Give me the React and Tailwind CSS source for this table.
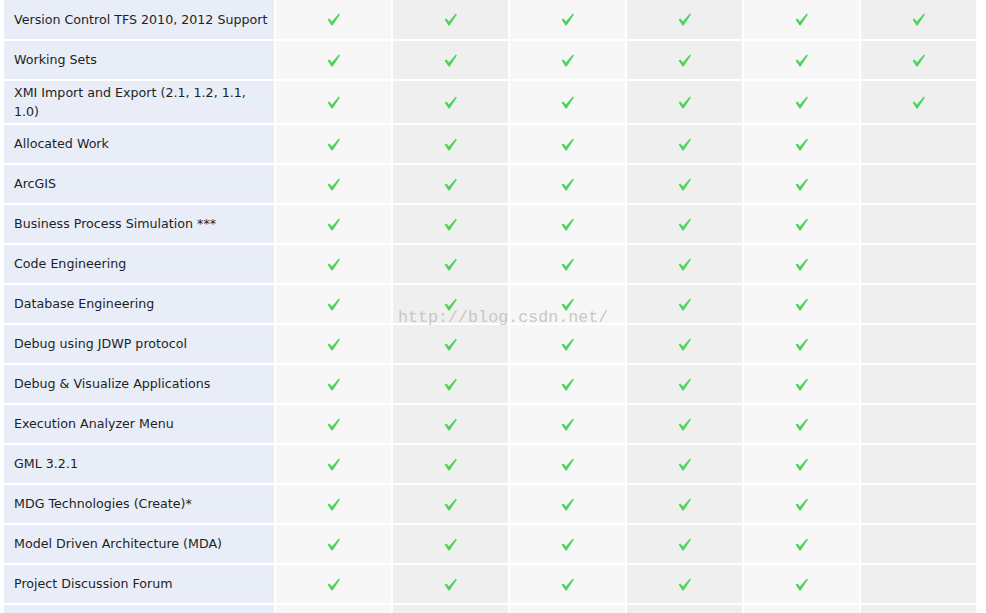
import React from "react";

const rows = [
  { label: "Version Control TFS 2010, 2012 Support", last: true, first: true },
  { label: "Working Sets", last: true },
  { label: ["XMI Import and Export (2.1, 1.2, 1.1,", "1.0)"], last: true },
  { label: "Allocated Work" },
  { label: "ArcGIS" },
  { label: "Business Process Simulation ***" },
  { label: "Code Engineering" },
  { label: "Database Engineering" },
  { label: "Debug using JDWP protocol" },
  { label: "Debug & Visualize Applications" },
  { label: "Execution Analyzer Menu" },
  { label: "GML 3.2.1" },
  { label: "MDG Technologies (Create)*" },
  { label: "Model Driven Architecture (MDA)" },
  { label: "Project Discussion Forum" },
  { label: "", empty: true },
];

function Check() {
  return (
    <svg width="13" height="13" viewBox="0 0 13 13" className="block">
      <path
        d="M0.6 6.6 L2.4 5.4 L4.9 8.6 L11.9 0.6 L12.9 1.5 L5.6 12.6 L4.5 12.6 Z"
        fill="#4ad55a"
      />
    </svg>
  );
}

export default function App() {
  const colBg = ["bg-[#f7f7f7]", "bg-[#efefef]", "bg-[#f7f7f7]", "bg-[#efefef]", "bg-[#f7f7f7]", "bg-[#efefef]"];
  return (
    <div className="relative h-[613px] w-[986px] overflow-hidden bg-white">
      <div
        className="grid grid-cols-[270px_repeat(6,115px)] gap-[2px] pl-[4px] text-[12.65px] text-[#1f1f24]"
        style={{ fontFamily: '"DejaVu Sans", Verdana, sans-serif' }}
      >
        {rows.map((r, i) => (
          <React.Fragment key={i}>
            <div
              className={`flex items-center bg-[#e8edf8] px-[10px] leading-[19px] whitespace-nowrap ${
                r.first ? "min-h-[39px] pt-[2px] pb-[3px]" : Array.isArray(r.label) ? "min-h-[38px] py-[2px]" : "min-h-[38px] pt-[1px] pb-[3px]"
              }`}
            >
              {Array.isArray(r.label) ? (
                <span>
                  {r.label[0]}
                  <br />
                  {r.label[1]}
                </span>
              ) : (
                <span>{r.label}</span>
              )}
            </div>
            {colBg.map((bg, c) => (
              <div key={c} className={`flex items-center justify-center ${bg}`}>
                {!r.empty && (c < 5 || r.last) ? <Check /> : null}
              </div>
            ))}
          </React.Fragment>
        ))}
      </div>
      <div
        className="pointer-events-none absolute left-[398px] top-[307px] text-[16.7px] leading-[22px] text-[#cbc7bf]"
        style={{ fontFamily: '"Liberation Mono", monospace' }}
      >
        http://blog.csdn.net/
      </div>
    </div>
  );
}
